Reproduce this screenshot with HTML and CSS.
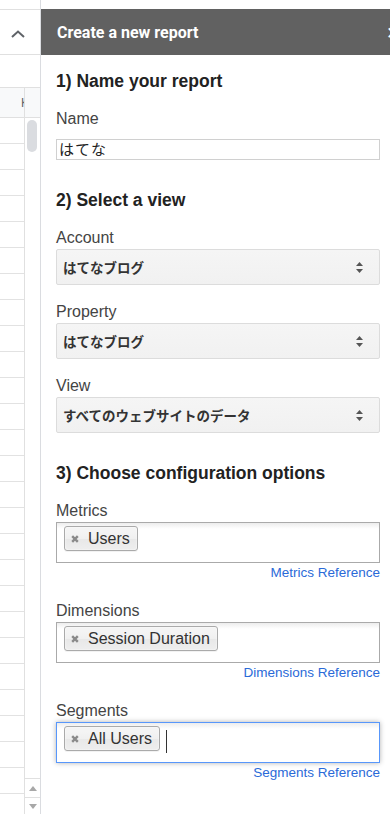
FILE: index.html
```html
<!DOCTYPE html>
<html lang="ja">
<head>
    <meta charset="UTF-8">
    <meta name="viewport" content="width=device-width, initial-scale=1.0">
    <title>Create a new report</title>
    <link rel="stylesheet" href="styles.css">
</head>
<body>
<div class="app">

    <!-- Spreadsheet edge behind the sidebar -->
    <div class="sheet">
        <div class="sheet-top"></div>
        <div class="sheet-toolbar">
            <svg class="chevron" width="14" height="8" viewBox="0 0 14 8">
                <path d="M1 7 L7 1.5 L13 7" fill="none" stroke="#5f6368" stroke-width="2"/>
            </svg>
        </div>
        <div class="sheet-formula"></div>
        <div class="sheet-grid">
            <div class="sheet-cols">
                <div class="col-head"><span>K</span></div>
                <div class="sheet-rows"></div>
            </div>
            <div class="scrollbar">
                <div class="scroll-head"></div>
                <div class="scroll-track"><div class="scroll-thumb"></div></div>
                <div class="scroll-btn">
                    <svg width="8" height="5" viewBox="0 0 8 5"><path d="M0 5 L4 0 L8 5 Z" fill="#a8a8a8"/></svg>
                </div>
                <div class="scroll-btn down">
                    <svg width="8" height="5" viewBox="0 0 8 5"><path d="M0 0 L4 5 L8 0 Z" fill="#a8a8a8"/></svg>
                </div>
            </div>
        </div>
    </div>

    <!-- Sidebar -->
    <div class="panel">
        <div class="panel-top"></div>
        <div class="panel-header">
            <span>Create a new report</span>
            <span class="close">×</span>
        </div>

        <div class="panel-body">
            <div class="section">
                <h2>1) Name your report</h2>
                <div class="field field-name">
                    <label>Name</label>
                    <input class="text-input" type="text" value="はてな">
                </div>
            </div>

            <div class="section">
                <h2>2) Select a view</h2>
                <div class="field">
                    <label>Account</label>
                    <div class="select">
                        <span>はてなブログ</span>
                        <svg width="9" height="13" viewBox="0 0 9 13"><path d="M1 5 L4.5 1 L8 5 Z M1 8 L4.5 12 L8 8 Z" fill="#555"/></svg>
                    </div>
                </div>
                <div class="field">
                    <label>Property</label>
                    <div class="select">
                        <span>はてなブログ</span>
                        <svg width="9" height="13" viewBox="0 0 9 13"><path d="M1 5 L4.5 1 L8 5 Z M1 8 L4.5 12 L8 8 Z" fill="#555"/></svg>
                    </div>
                </div>
                <div class="field">
                    <label>View</label>
                    <div class="select">
                        <span>すべてのウェブサイトのデータ</span>
                        <svg width="9" height="13" viewBox="0 0 9 13"><path d="M1 5 L4.5 1 L8 5 Z M1 8 L4.5 12 L8 8 Z" fill="#555"/></svg>
                    </div>
                </div>
            </div>

            <div class="section">
                <h2>3) Choose configuration options</h2>
                <div class="field multi">
                    <label>Metrics</label>
                    <div class="chosen">
                        <span class="tag">
                            <svg width="8" height="8" viewBox="0 0 8 8"><path d="M1.2 1.2 L6.8 6.8 M6.8 1.2 L1.2 6.8" stroke="#8a8a8a" stroke-width="2.4"/></svg>
                            Users
                        </span>
                    </div>
                    <a class="ref" href="#">Metrics Reference</a>
                </div>
                <div class="field multi">
                    <label>Dimensions</label>
                    <div class="chosen">
                        <span class="tag">
                            <svg width="8" height="8" viewBox="0 0 8 8"><path d="M1.2 1.2 L6.8 6.8 M6.8 1.2 L1.2 6.8" stroke="#8a8a8a" stroke-width="2.4"/></svg>
                            Session Duration
                        </span>
                    </div>
                    <a class="ref" href="#">Dimensions Reference</a>
                </div>
                <div class="field multi">
                    <label>Segments</label>
                    <div class="chosen active">
                        <span class="tag">
                            <svg width="8" height="8" viewBox="0 0 8 8"><path d="M1.2 1.2 L6.8 6.8 M6.8 1.2 L1.2 6.8" stroke="#8a8a8a" stroke-width="2.4"/></svg>
                            All Users
                        </span>
                        <span class="caret"></span>
                    </div>
                    <a class="ref" href="#">Segments Reference</a>
                </div>
            </div>
        </div>
    </div>

</div>
</body>
</html>
```

FILE: styles.css
```css
/* General */
body {
    margin: 0;
    overflow: hidden;
    background-color: #fff;
    color: #333;
    font-family: "Liberation Sans", Arial, "Noto Sans CJK JP", sans-serif;
}

.app {
    display: flex;
    height: 814px;
}

/* Spreadsheet edge */
.sheet {
    width: 41px;
    flex: none;
    box-sizing: border-box;
    border-right: 1px solid #dadce0;
    display: flex;
    flex-direction: column;
    overflow: hidden;
}

.sheet-top {
    height: 9px;
    flex: none;
    border-bottom: 1px solid #e0e0e0;
}

.sheet-toolbar {
    height: 45px;
    flex: none;
    box-sizing: border-box;
    border-bottom: 1px solid #e0e0e0;
    display: flex;
    align-items: center;
    justify-content: center;
    padding: 3px 5px 0 0;
}

.sheet-formula {
    height: 32px;
    flex: none;
    border-bottom: 1px solid #e0e0e0;
}

.sheet-grid {
    flex: 1;
    min-height: 0;
    display: flex;
}

.sheet-cols {
    width: 24px;
    border-right: 1px solid #e0e0e0;
    display: flex;
    flex-direction: column;
    overflow: hidden;
}

.col-head,
.scroll-head {
    height: 29px;
    flex: none;
    background-color: #f8f9fa;
    border-bottom: 1px solid #e0e0e0;
}

.col-head {
    display: flex;
    align-items: center;
    justify-content: flex-end;
    font-size: 12px;
    color: #5f6368;
}

.col-head span {
    margin-right: -5px;
}

.sheet-rows {
    flex: 1;
    background: repeating-linear-gradient(#fff 0 25px, #e2e2e2 25px 26px);
}

.scrollbar {
    width: 15px;
    display: flex;
    flex-direction: column;
}

.scroll-track {
    flex: 1;
    padding: 2px 0 0 2px;
}

.scroll-thumb {
    width: 10px;
    height: 32px;
    border-radius: 5px;
    background-color: #dadce0;
}

.scroll-btn {
    height: 18px;
    flex: none;
    border-top: 1px solid #e0e0e0;
    display: flex;
    align-items: center;
    justify-content: center;
}

.scroll-btn.down {
    height: 16px;
}

/* Sidebar */
.panel {
    width: 354px;
    flex: none;
    display: flex;
    flex-direction: column;
}

.panel-top {
    height: 9px;
}

.panel-header {
    height: 46px;
    flex: none;
    display: flex;
    align-items: center;
    justify-content: space-between;
    padding-left: 16px;
    background-color: #616161;
    color: #fff;
    font-family: Roboto, "Liberation Sans", sans-serif;
    font-size: 16px;
    font-weight: bold;
}

.close {
    font-size: 22px;
    font-weight: normal;
    margin-right: -4px;
}

.panel-body {
    padding: 16px 15px 0;
}

.section h2 {
    margin: 0 0 19px;
    font-size: 17.5px;
    line-height: 20px;
    font-weight: bold;
    color: #222;
}

.section + .section {
    margin-top: 30px;
}

/* Fields */
.field {
    margin-bottom: 18px;
}

.field:last-child {
    margin-bottom: 0;
}

.field label {
    display: block;
    font-size: 16px;
    line-height: 18px;
    margin-bottom: 2px;
    color: #444;
}

.field-name label {
    margin-bottom: 11px;
}

.text-input {
    display: block;
    width: 100%;
    height: 21px;
    box-sizing: border-box;
    margin: 0;
    padding: 0 2px 2px;
    border: 1px solid #d0d0d0;
    font-family: "Noto Sans CJK JP", sans-serif;
    font-size: 15px;
    line-height: 17px;
    letter-spacing: 1px;
    color: #222;
    outline: none;
}

.select {
    height: 36px;
    box-sizing: border-box;
    border: 1px solid #dcdcdc;
    border-radius: 2px;
    background: linear-gradient(#f5f5f5, #f1f1f1);
    display: flex;
    align-items: center;
    justify-content: space-between;
    padding: 0 15px 0 6px;
    font-size: 13.5px;
    font-weight: bold;
    color: #333;
}

/* Multi select boxes */
.field.multi {
    margin-bottom: 21px;
}

.field.multi:last-child {
    margin-bottom: 0;
}

.chosen {
    height: 41px;
    box-sizing: border-box;
    border: 1px solid #aaa;
    background: linear-gradient(#eee 1%, #fff 15%);
    padding: 3px 7px;
    display: flex;
    align-items: flex-start;
    gap: 6px;
}

.chosen.active {
    border-color: #5897fb;
    box-shadow: 0 0 5px rgba(0, 0, 0, 0.3);
}

.tag {
    height: 25px;
    box-sizing: border-box;
    display: flex;
    align-items: center;
    padding: 0 7px 0 6px;
    border: 1px solid #aaa;
    border-radius: 3px;
    background: linear-gradient(#f4f4f4 20%, #f0f0f0 50%, #e8e8e8 52%, #eee 100%);
    box-shadow: 0 0 2px #fff inset, 0 1px 0 rgba(0, 0, 0, 0.05);
    font-size: 16px;
    color: #333;
    white-space: nowrap;
}

.tag svg {
    margin-right: 9px;
}

.caret {
    width: 1px;
    height: 23px;
    margin-top: 4px;
    background-color: #333;
}

.ref {
    display: block;
    margin-top: 2px;
    text-align: right;
    font-size: 13.5px;
    line-height: 16px;
    color: #2a6ad8;
    text-decoration: none;
}
```
